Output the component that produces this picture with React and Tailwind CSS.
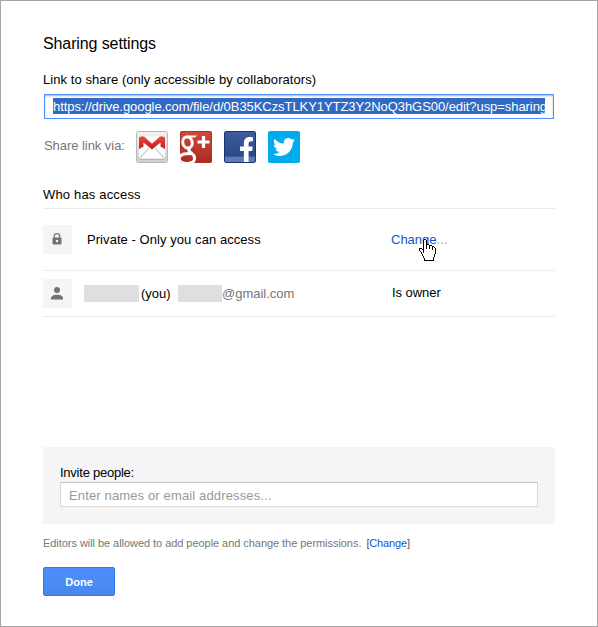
import { FaTwitter, FaFacebookF } from 'react-icons/fa';

const HAND = [
  '.....XX..........',
  '....XooX.........',
  '....XooX.........',
  '....XooX.........',
  '....XooX.........',
  '....XooXXX.......',
  '....XooXooXXX....',
  '....XooXooXooXX..',
  '....XooXooXooXoX.',
  'XXX.XooXooXooXooX',
  'XooXXooooooooXooX',
  'XoooXoooooooooooX',
  '.XooXoooooooooooX',
  '..XoXoooooooooooX',
  '..XoooooooooooooX',
  '...XoooooooooooX.',
  '...XoooooooooooX.',
  '....XooooooooooX.',
  '....XoooooooooX..',
  '.....XooooooooX..',
  '.....XooooooooX..',
  '.....XXXXXXXXXX..',
];

function HandCursor() {
  return (
    <svg className="absolute left-[28px] top-[14px]" width="17" height="22" shapeRendering="crispEdges">
      {HAND.flatMap((row, y) =>
        [...row].map((c, x) =>
          c === '.' ? null : <rect key={`${x}-${y}`} x={x} y={y} width="1" height="1" fill={c === 'X' ? '#000' : '#fff'} />
        )
      )}
    </svg>
  );
}

function Gmail() {
  return (
    <svg width="32" height="32" viewBox="0 0 32 32">
      <defs>
        <linearGradient id="gm" x1="0" y1="0" x2="0" y2="1">
          <stop offset="0" stopColor="#f4f4f4" />
          <stop offset="1" stopColor="#cfcfcf" />
        </linearGradient>
        <linearGradient id="gr" x1="0" y1="0" x2="0" y2="1">
          <stop offset="0" stopColor="#e8463c" />
          <stop offset="1" stopColor="#c4201b" />
        </linearGradient>
      </defs>
      <rect x="0.5" y="0.5" width="31" height="31" rx="2" fill="url(#gm)" stroke="#b8b8b8" />
      <rect x="3" y="5.500" width="26" height="22.500" rx="1.500" fill="#fdfdfd" />
      <path d="M3.500 27.500 12.500 17.500M28.500 27.500 19.500 17.500" stroke="#b5b5b5" strokeWidth="1" fill="none" />
      <path d="M3.500 28.300h25" stroke="#aaa" />
      <path d="M3 18V7.500Q3 5.500 5 5.500H8L16 12.800 24 5.500H27Q29 5.500 29 7.500V18L24.500 15.500V11.500L16 18.500 7.500 11.500V15.500Z" fill="url(#gr)" />
    </svg>
  );
}

function GooglePlus() {
  return (
    <svg width="32" height="32" viewBox="0 0 32 32">
      <defs>
        <linearGradient id="gp" x1="0" y1="0" x2="0" y2="1">
          <stop offset="0" stopColor="#d5493c" />
          <stop offset="1" stopColor="#a92b20" />
        </linearGradient>
        <clipPath id="gc"><rect width="32" height="32" rx="2" /></clipPath>
      </defs>
      <g clipPath="url(#gc)">
        <rect width="32" height="32" fill="url(#gp)" />
        <rect x="0.500" y="0.500" width="31" height="31" rx="2" fill="none" stroke="#ad3226" />
        <ellipse cx="7.500" cy="11.500" rx="4.700" ry="5.600" transform="rotate(-14 7.500 11.500)" fill="none" stroke="#fff" strokeWidth="3" />
        <path d="M7 4.500H17L15 6.600H11" fill="#fff" />
        <path d="M10 17C8 19 8.500 20 11.500 22.300C16.500 26 15.500 32.500 7 32.500C-2 32.500-3 25.500 3 23.300C5.500 22.500 8.500 22.500 11 22.500" fill="none" stroke="#fff" strokeWidth="3" />
        <path d="M23.500 5V17M17.500 11H29.500" stroke="#fff" strokeWidth="3.200" />
      </g>
    </svg>
  );
}

function Facebook() {
  return (
    <div className="relative h-8 w-8 overflow-hidden rounded-[2px] border border-[#1c376f] bg-linear-to-b from-[#3c5c9d] to-[#254686]">
      <div className="absolute inset-x-0 bottom-0 h-[6px] border-t border-[#3c5b98] bg-[#5d79b3]" />
      <FaFacebookF className="absolute left-[14px] top-[5px] h-[25px] w-[15px] text-white" preserveAspectRatio="none" />
    </div>
  );
}

export default function App() {
  return (
    <div className="h-[627px] w-[598px] border border-[#a5a5a5] bg-white pl-[42px] pr-[42px] pt-[33px] font-['Liberation_Sans',Arial,sans-serif] text-[13px] leading-4 text-black">
      <h1 className="h-5 whitespace-nowrap text-[16px] leading-[20px] tracking-[-0.11px]">Sharing settings</h1>
      <div className="mt-[18px] h-4 whitespace-nowrap tracking-[0.06px]">Link to share (only accessible by collaborators)</div>
      <div className="ml-px mt-[6px] h-[25px] w-[510px] border border-[#4d90fe] px-2 pt-[3px] shadow-[inset_0_1px_2px_rgba(0,0,0,0.3)]">
        <div className="h-4 w-[492px] overflow-hidden whitespace-nowrap bg-[#316ac5] leading-[18px] tracking-[-0.065px] text-white">https://drive.google.com/file/d/0B35KCzsTLKY1YTZ3Y2NoQ3hGS00/edit?usp=sharing</div>
      </div>
      <div className="mt-3 flex h-8">
        <span className="ml-px w-[92px] whitespace-nowrap pt-[7px] tracking-[-0.05px] text-[#777]">Share link via:</span>
        <div className="flex gap-3">
          <Gmail />
          <GooglePlus />
          <Facebook />
          <div className="flex h-8 w-8 items-center justify-center rounded-[2px] bg-[#00acee]">
            <FaTwitter className="h-[22px] w-[22px] text-white" />
          </div>
        </div>
      </div>
      <div className="mt-6 h-[22px] border-b border-[#ebebeb] tracking-[0.17px]">Who has access</div>
      <div className="flex h-[62px] border-b border-[#ebebeb] pt-4">
        <div className="flex h-[29px] w-[29px] items-center justify-center bg-[#f5f5f5]">
          <svg className="-mt-px -ml-px" width="10" height="12" viewBox="0 0 10 12">
            <path d="M2.200 5V3.500a2.800 2.800 0 0 1 5.600 0V5" fill="none" stroke="#777" strokeWidth="1.200" />
            <rect x="0.500" y="4.500" width="9" height="7" rx="1" fill="#737373" />
            <circle cx="5" cy="8" r="1.200" fill="#f5f5f5" />
          </svg>
        </div>
        <span className="ml-[15px] w-[304px] pt-[7px] tracking-[0.06px]">Private - Only you can access</span>
        <span className="relative h-4 pt-[7px] text-[#1155cc]">
          <span>Change</span><span className="text-[#8899cc]">...</span>
          <HandCursor />
        </span>
      </div>
      <div className="flex h-[46px] border-b border-[#ebebeb] pt-2">
        <div className="flex h-[29px] w-[29px] items-center justify-center bg-[#f5f5f5]">
          <svg className="-ml-px" width="12" height="13" viewBox="0 0 12 13">
            <circle cx="6" cy="3" r="3" fill="#737373" />
            <path d="M0 12.500V11C0 9 2.500 7.700 6 7.700S12 9 12 11V12.500Z" fill="#737373" />
          </svg>
        </div>
        <div className="ml-3 mt-[6px] h-[17px] w-[55px] bg-[#dfdfdf]" />
        <span className="ml-[2px] w-[37px] whitespace-nowrap pt-[7px]">(you)</span>
        <div className="mt-[6px] h-[17px] w-[44px] bg-[#dfdfdf]" />
        <span className="w-[170px] pt-[7px] text-[#777]">@gmail.com</span>
        <span className="pt-[6px] tracking-[-0.05px]">Is owner</span>
      </div>
      <div className="mt-[130px] h-[77px] bg-[#f5f5f5] px-[17px] pt-[18px]">
        <div className="h-[17px] tracking-[-0.24px]">Invite people:</div>
        <div className="h-[25px] border border-[#d9d9d9] border-t-[#c0c0c0] bg-white pl-2 pt-[5px] tracking-[0.14px] text-[#999]">Enter names or email addresses...</div>
      </div>
      <div className="mt-[12px] h-[14px] whitespace-pre text-[11px] leading-[14px] text-[#777]">
        <span className="tracking-[-0.05px]">Editors will be allowed to add people and change the permissions.</span><span className="ml-[5px] tracking-[-0.15px] text-[#555]">[<span className="text-[#1155cc]">Change</span>]</span>
      </div>
      <button className="mt-[17px] flex h-[29px] w-[72px] items-center justify-center rounded-[2px] border border-[#3079ed] bg-linear-to-b from-[#4d90fe] to-[#4787ed] text-[11px] font-bold text-white">Done</button>
    </div>
  );
}
